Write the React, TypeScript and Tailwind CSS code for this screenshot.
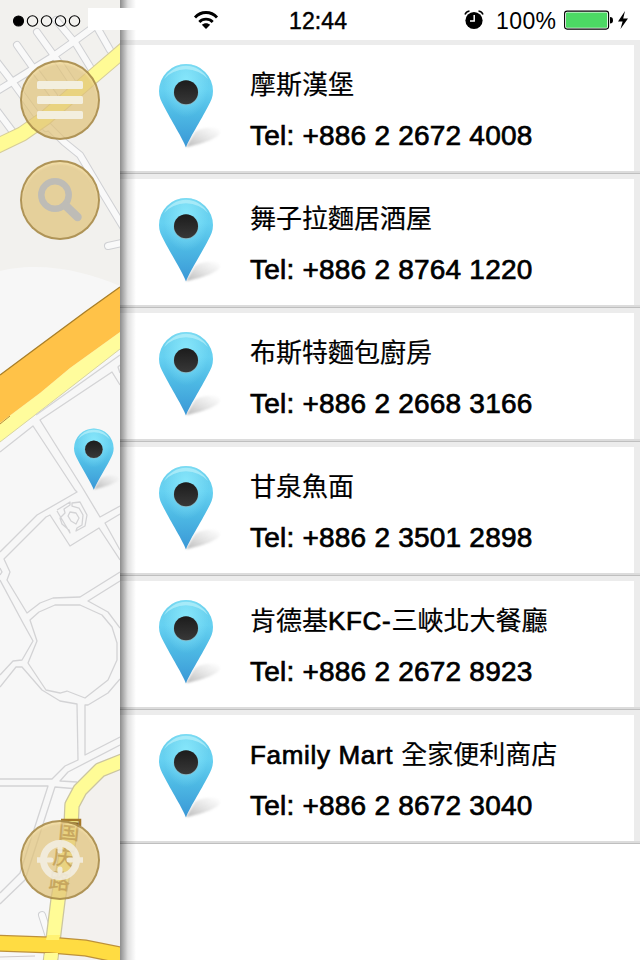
type Place = {
  name: { text: string; latin?: boolean }[];
  tel: string;
};

const places: Place[] = [
  { name: [{ text: "摩斯漢堡" }], tel: "+886 2 2672 4008" },
  { name: [{ text: "舞子拉麵居酒屋" }], tel: "+886 2 8764 1220" },
  { name: [{ text: "布斯特麵包廚房" }], tel: "+886 2 2668 3166" },
  { name: [{ text: "甘泉魚面" }], tel: "+886 2 3501 2898" },
  {
    name: [{ text: "肯德基" }, { text: "KFC-", latin: true }, { text: "三峽北大餐廳" }],
    tel: "+886 2 2672 8923",
  },
  {
    name: [{ text: "Family Mart ", latin: true }, { text: "全家便利商店" }],
    tel: "+886 2 8672 3040",
  },
];

const pinShape =
  "M27 83.5 C24 75 12 56 5 42.5 C2 37 0 33 0 27 A27 27 0 0 1 54 27 C54 33 52 37 49 42.5 C42 56 30 75 27 83.5Z";

function Pin({ className, id }: { className: string; id: string }) {
  return (
    <svg viewBox="0 0 64 86" className={className}>
      <defs>
        <linearGradient id={`${id}-body`} x1="0" y1="0" x2="0" y2="1">
          <stop offset="0" stopColor="#6ccfeb" />
          <stop offset="0.3" stopColor="#66d1f1" />
          <stop offset="0.6" stopColor="#4db9e4" />
          <stop offset="1" stopColor="#3a97d6" />
        </linearGradient>
        <radialGradient id={`${id}-glow`} cx="0.5" cy="0.22" r="0.42">
          <stop offset="0" stopColor="#8beafd" stopOpacity="0.9" />
          <stop offset="1" stopColor="#8beafd" stopOpacity="0" />
        </radialGradient>
        <linearGradient id={`${id}-hole`} x1="0" y1="0" x2="0" y2="1">
          <stop offset="0" stopColor="#1c1c1c" />
          <stop offset="1" stopColor="#383838" />
        </linearGradient>
        <linearGradient id={`${id}-shade`} x1="0" y1="1" x2="1" y2="0">
          <stop offset="0" stopColor="#888" stopOpacity="0.6" />
          <stop offset="0.8" stopColor="#bbb" stopOpacity="0.15" />
          <stop offset="1" stopColor="#ccc" stopOpacity="0" />
        </linearGradient>
        <filter id={`${id}-soft`}>
          <feGaussianBlur stdDeviation="1.2" />
        </filter>
      </defs>
      <path
        d="M27 83 L36 68 C45 62 60 63 61 68 C61 74 43 80 27 83Z"
        fill={`url(#${id}-shade)`}
        filter={`url(#${id}-soft)`}
      />
      <path d={pinShape} fill={`url(#${id}-body)`} />
      <path d={pinShape} fill={`url(#${id}-glow)`} />
      <path d="M5 15 A25 25 0 0 1 49 15 A27 23 0 0 0 5 15Z" fill="#b6effa" opacity="0.75" />
      <circle cx="27" cy="28.8" r="12.4" fill="#83b8c7" />
      <circle cx="27" cy="28.3" r="12" fill={`url(#${id}-hole)`} />
    </svg>
  );
}

function MapView() {
  return (
    <svg viewBox="0 0 120 960" className="block h-[960px] w-[120px]" fill="none">
      <rect width="120" height="960" fill="#f7f7f7" />
      <path d="M0 0H120V286C95 275 65 267 35 267C20 267 8 269 0 271Z" fill="#f2f1ee" />
      <path d="M120 765L98 773L84 788L78 805L78 830L60 930L58 960H120Z" fill="#f3f1ee" />

      {/* town streets in the top corner */}
      <g strokeLinecap="round" strokeLinejoin="round">
        <g stroke="#cfd0d3" strokeWidth="8">
          <path d="M-6 93L12 82L52 57L76 40L106 18" />
          <path d="M-6 58L14 84L46 128" />
          <path d="M-8 104L13 132" />
          <path d="M17 45L36 72L54 96" />
          <path d="M37 32L60 64L72 82" />
          <path d="M56 20L76 44L92 70" />
          <path d="M94 22L110 50" />
          <path d="M48 126L64 142L80 155L102 192L125 230" />
          <path d="M108 246L126 242" />
        </g>
        <g stroke="#f9f9f9" strokeWidth="6">
          <path d="M-6 93L12 82L52 57L76 40L106 18" />
          <path d="M-6 58L14 84L46 128" />
          <path d="M-8 104L13 132" />
          <path d="M17 45L36 72L54 96" />
          <path d="M37 32L60 64L72 82" />
          <path d="M56 20L76 44L92 70" />
          <path d="M94 22L110 50" />
          <path d="M48 126L64 142L80 155L102 192L125 230" />
          <path d="M108 246L126 242" />
        </g>
      </g>
      <path d="M-5 147L22 134L45 118L90 79L125 49" stroke="#d6cd9a" strokeWidth="15.5" />
      <path d="M-5 147L22 134L45 118L90 79L125 49" stroke="#fffb95" strokeWidth="13.5" />

      {/* highway */}
      <path d="M0 423L40 393L70 368L120 332V349L75 384L35 415L0 442Z" fill="#fffc9c" />
      <path d="M0 442L35 415L75 384L120 349" stroke="#d8d5a0" strokeWidth="1" />
      <path d="M0 375L35 349L85 312L120 287V332L70 368L40 393L0 423Z" fill="#ffc248" />
      <path d="M0 375L35 349L85 312L120 287" stroke="#a97f28" strokeWidth="1.4" />
      <path d="M0 424L10 416" stroke="#b98c36" />

      {/* street edges */}
      <g stroke="#d3d3d5" strokeWidth="1.3" strokeLinejoin="round">
        <path d="M0 452L33 426L75 490L77 492L37 515L0 552" />
        <path d="M36 415L120 355" />
        <path d="M120 385L112 372L40 420L82 487L100 517L120 506" />
        <path d="M120 373L118 367L120 365" />
        <path d="M120 550L105 523L120 514" />
        <path d="M120 560L99 528L70 546L50 515L46 517L4 559L10 572L7 580L27 613L40 603L53 598L80 597L120 572" />
        <path d="M0 580L23 623L33 641L22 660L13 661L0 675" />
        <path d="M0 568L2 572L0 575" />
        <path d="M0 687L16 667L22 667L42 690L60 701L77 704L78 760L65 766L52 779L0 779" />
        <path d="M30 620L37 641L28 663L46 690L60 693L67 691L85 698L108 680L117 660L117 643L112 627L102 615L80 605L55 605L39 612Z" />
        <path d="M120 581L88 601L108 612L120 628" />
        <path d="M120 679L108 693L88 705L85 705L85 755L120 737" />
        <path d="M0 786L48 786L20 873L0 893" />
        <path d="M78 789L55 787L25 880L0 904" />
        <path d="M77 782L60 781L68 772L120 745" />
        <path d="M57 510L70 502L70 505L64 509L65 513L60 518L62 524L69 530L70 533L57 511" />
        <path d="M72 503L80 502L87 515L85 526L76 531L77 528L82 525L83 515L79 508L72 506Z" />
        <path d="M70 512L76 513L79 518L76 524L71 521L68 516Z" />
      </g>

      {/* yellow road with its name */}
      <path d="M50 940L42 915" stroke="#cfd0d3" strokeWidth="8" strokeLinecap="round" />
      <path d="M50 940L42 915" stroke="#f9f9f9" strokeWidth="6" strokeLinecap="round" />
      <path d="M125 760L100 770L80 790L72 805L71 828L58 900L50 965" stroke="#cbc5a0" strokeWidth="15.5" strokeLinejoin="round" />
      <path d="M125 760L100 770L80 790L72 805L71 828L58 900L50 965" stroke="#fffc96" strokeWidth="13" strokeLinejoin="round" />
      <path d="M-5 943L50 945L85 948L125 956" stroke="#bd913a" strokeWidth="17" />
      <path d="M-5 943L50 945L85 948L125 956" stroke="#ffdc42" strokeWidth="14.5" />
      <path d="M47 935H60L59 940H46Z" fill="#fff273" />
      <path d="M45 953H58L57 960H44Z" fill="#fffc96" />
      <path d="M0 957L35 956" stroke="#cfc9c9" />
      <path d="M61 820H80V826" stroke="#a57929" strokeWidth="2.5" />
      <g fill="#8a6320" stroke="#8a6320" strokeWidth="0.4" fontSize="21" fontFamily="Noto Sans CJK SC, sans-serif">
        <text x="58.5" y="839" transform="rotate(5 69 832)">国</text>
        <text x="53" y="865" transform="rotate(6 64 857)">庆</text>
        <text x="49" y="889" transform="rotate(6 60 882)">路</text>
      </g>
    </svg>
  );
}

const roundButton =
  "flex size-20 items-center justify-center rounded-full border-2 border-[#9d8040]/75 bg-[#dfc278]/70 shadow-[inset_0_2px_2px_rgba(255,235,180,0.5)]";

function MapControls() {
  return (
    <div className="absolute inset-0 flex flex-col items-center gap-5 pt-[60px] pb-[60px]">
      <button className={roundButton} aria-label="Menu">
        <svg viewBox="0 0 46 38" className="h-[38px] w-[46px]" fill="#f3efdf">
          <rect width="46" height="8" rx="1.5" />
          <rect y="15" width="46" height="8" rx="1.5" />
          <rect y="30" width="46" height="8" rx="1.5" />
        </svg>
      </button>
      <button className={roundButton} aria-label="Search">
        <svg viewBox="0 0 46 46" className="size-[46px]" fill="none" stroke="#bebcb6">
          <circle cx="18" cy="18" r="13.7" strokeWidth="6.5" />
          <path d="M28.5 28.5L40.5 40" strokeWidth="8.5" strokeLinecap="round" />
        </svg>
      </button>
      <button className={`${roundButton} mt-auto`} aria-label="Locate">
        <svg viewBox="0 0 48 48" className="size-12" fill="none" stroke="#f3efe4" opacity="0.88">
          <circle cx="24" cy="24" r="16.5" strokeWidth="7" />
          <path d="M1 24H7M41 24H47" strokeWidth="5.5" />
          <path d="M12 24H15M33 24H36M24 12V15M24 33V36" strokeWidth="5" strokeLinecap="round" />
        </svg>
      </button>
    </div>
  );
}

function StatusBar() {
  return (
    <header className="absolute inset-x-0 top-0 flex h-10 items-center">
      <svg viewBox="0 0 72 14" className="mt-px ml-3 h-[14px] w-[72px]" fill="none" stroke="#000" strokeWidth="1.1">
        <circle cx="6.5" cy="7" r="5" fill="#000" />
        <circle cx="20.5" cy="7" r="5.2" />
        <circle cx="34.5" cy="7" r="5.2" />
        <circle cx="48.5" cy="7" r="5.2" />
        <circle cx="62.5" cy="7" r="5.2" />
      </svg>
      <div className="mb-0.5 ml-1 h-[22px] w-[92px] bg-white" />
      <svg viewBox="0 0 26 20" className="ml-[13px] h-5 w-[26px]" fill="none" stroke="#000" strokeWidth="2.8">
        <path d="M2 7.5C8 0.8 18 0.8 24 7.5" />
        <path d="M6.3 11.9C10 8.1 16 8.1 19.7 11.9" />
        <path d="M13 19L8.8 14.8C11 12.7 15 12.7 17.2 14.8Z" fill="#000" stroke="none" />
      </svg>
      <span className="mt-0.5 ml-[70px] w-[60px] text-[23px] leading-10 tracking-[0.1px] whitespace-nowrap [-webkit-text-stroke:0.45px_black]">
        12:44
      </span>
      <svg viewBox="0 0 20 20" className="ml-[115px] size-5">
        <circle cx="10" cy="10.5" r="8.6" />
        <path d="M1 4.5Q2 1.5 5.5 1M14.5 1Q18 1.5 19 4.5" fill="none" stroke="#000" strokeWidth="1.5" />
        <path d="M10.2 5V11H6" fill="none" stroke="#fff" strokeWidth="1.5" />
      </svg>
      <span className="mt-0.5 ml-3 w-[60px] text-[23px] leading-10 tracking-[0.4px] whitespace-nowrap">100%</span>
      <svg viewBox="0 0 66 20" className="ml-2 h-5 w-[66px]">
        <rect x="0.6" y="1.1" width="44" height="18" rx="2.5" fill="#fff" stroke="#000" strokeWidth="1.1" />
        <rect x="2" y="2.5" width="41.2" height="15.2" rx="1" fill="#4cd964" />
        <path d="M46 7Q49 7 49 10.2T46 13.5Z" />
        <path d="M61 1L54 11.4H58.6L56.5 19L64 8.4H59.2Z" />
      </svg>
    </header>
  );
}

function PlaceRow({ place, id }: { place: Place; id: string }) {
  return (
    <li className="flex h-[134px] flex-col border-b border-[#bfbfbf] bg-[#ececec] pt-[5px]">
      <div className="mr-1.5 flex h-[126px] bg-white pt-5 pl-[39px]">
        <Pin id={id} className="-mt-px h-[86px] w-16 shrink-0" />
        <div className="-mt-px ml-[27px] whitespace-nowrap">
          <h2 className="h-[42px] text-[26px] leading-[42px] [-webkit-text-stroke:0.2px_black]">
            {place.name.map((part) => (
              <span
                key={part.text}
                className={
                  part.latin
                    ? "tracking-[0.68px] whitespace-pre [-webkit-text-stroke:0.7px_black]"
                    : ""
                }
              >
                {part.text}
              </span>
            ))}
          </h2>
          <p className="mt-2.5 text-[28px] leading-10 tracking-[0.22px] [-webkit-text-stroke:0.7px_black]">
            Tel: {place.tel}
          </p>
        </div>
      </div>
      <div className="h-0.5 bg-[#dcdcdc]" />
    </li>
  );
}

export default function App() {
  return (
    <div className="relative flex h-[960px] w-[640px] overflow-hidden bg-white font-['Liberation_Sans','Noto_Sans_CJK_TC',sans-serif] text-black">
      <aside className="relative w-[120px] shrink-0">
        <MapView />
        <Pin id="map-pin" className="absolute top-[428px] left-[74px] h-[64px] w-[47px]" />
        <MapControls />
      </aside>
      <main className="relative w-[520px] pt-10">
        <ul>
          {places.map((place, index) => (
            <PlaceRow key={place.tel} place={place} id={`pin-${index}`} />
          ))}
        </ul>
        <div className="absolute inset-y-0 left-0 w-4 bg-linear-to-r from-black/45 via-black/12 to-transparent" />
      </main>
      <StatusBar />
    </div>
  );
}
